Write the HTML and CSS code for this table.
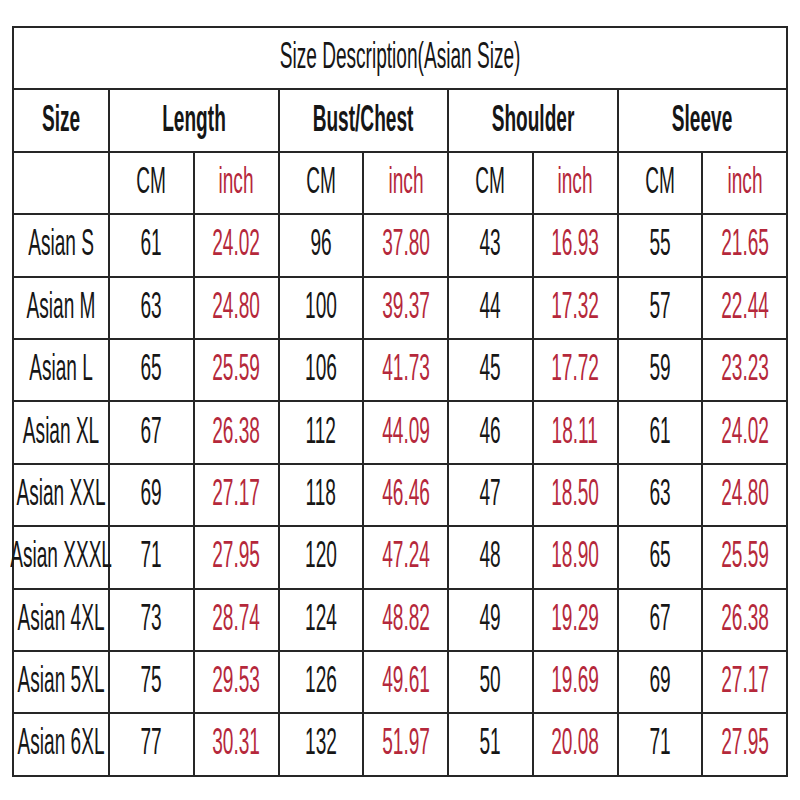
FILE: index.html
```html
<!DOCTYPE html>
<html>
<head>
<meta charset="utf-8">
<link rel="stylesheet" href="styles.css">
</head>
<body>
<table class="sizes">
  <colgroup>
    <col class="c-size">
    <col class="c-val"><col class="c-val"><col class="c-val"><col class="c-val">
    <col class="c-val"><col class="c-val"><col class="c-val"><col class="c-val">
  </colgroup>
  <tr><td colspan="9"><div class="cell"><span class="t">Size Description(Asian Size)</span></div></td></tr>
  <tr class="head">
    <td><div class="cell"><span class="t">Size</span></div></td>
    <td colspan="2"><div class="cell"><span class="t">Length</span></div></td>
    <td colspan="2"><div class="cell"><span class="t">Bust/Chest</span></div></td>
    <td colspan="2"><div class="cell"><span class="t">Shoulder</span></div></td>
    <td colspan="2"><div class="cell"><span class="t">Sleeve</span></div></td>
  </tr>
  <tr>
    <td></td>
    <td><div class="cell"><span class="t">CM</span></div></td><td class="red"><div class="cell"><span class="t">inch</span></div></td>
    <td><div class="cell"><span class="t">CM</span></div></td><td class="red"><div class="cell"><span class="t">inch</span></div></td>
    <td><div class="cell"><span class="t">CM</span></div></td><td class="red"><div class="cell"><span class="t">inch</span></div></td>
    <td><div class="cell"><span class="t">CM</span></div></td><td class="red"><div class="cell"><span class="t">inch</span></div></td>
  </tr>
  <tr>
    <td><div class="cell"><span class="t">Asian S</span></div></td>
    <td><div class="cell"><span class="t">61</span></div></td><td class="red"><div class="cell"><span class="t">24.02</span></div></td>
    <td><div class="cell"><span class="t">96</span></div></td><td class="red"><div class="cell"><span class="t">37.80</span></div></td>
    <td><div class="cell"><span class="t">43</span></div></td><td class="red"><div class="cell"><span class="t">16.93</span></div></td>
    <td><div class="cell"><span class="t">55</span></div></td><td class="red"><div class="cell"><span class="t">21.65</span></div></td>
  </tr>
  <tr>
    <td><div class="cell"><span class="t">Asian M</span></div></td>
    <td><div class="cell"><span class="t">63</span></div></td><td class="red"><div class="cell"><span class="t">24.80</span></div></td>
    <td><div class="cell"><span class="t">100</span></div></td><td class="red"><div class="cell"><span class="t">39.37</span></div></td>
    <td><div class="cell"><span class="t">44</span></div></td><td class="red"><div class="cell"><span class="t">17.32</span></div></td>
    <td><div class="cell"><span class="t">57</span></div></td><td class="red"><div class="cell"><span class="t">22.44</span></div></td>
  </tr>
  <tr>
    <td><div class="cell"><span class="t">Asian L</span></div></td>
    <td><div class="cell"><span class="t">65</span></div></td><td class="red"><div class="cell"><span class="t">25.59</span></div></td>
    <td><div class="cell"><span class="t">106</span></div></td><td class="red"><div class="cell"><span class="t">41.73</span></div></td>
    <td><div class="cell"><span class="t">45</span></div></td><td class="red"><div class="cell"><span class="t">17.72</span></div></td>
    <td><div class="cell"><span class="t">59</span></div></td><td class="red"><div class="cell"><span class="t">23.23</span></div></td>
  </tr>
  <tr>
    <td><div class="cell"><span class="t">Asian XL</span></div></td>
    <td><div class="cell"><span class="t">67</span></div></td><td class="red"><div class="cell"><span class="t">26.38</span></div></td>
    <td><div class="cell"><span class="t">112</span></div></td><td class="red"><div class="cell"><span class="t">44.09</span></div></td>
    <td><div class="cell"><span class="t">46</span></div></td><td class="red"><div class="cell"><span class="t">18.11</span></div></td>
    <td><div class="cell"><span class="t">61</span></div></td><td class="red"><div class="cell"><span class="t">24.02</span></div></td>
  </tr>
  <tr>
    <td><div class="cell"><span class="t">Asian XXL</span></div></td>
    <td><div class="cell"><span class="t">69</span></div></td><td class="red"><div class="cell"><span class="t">27.17</span></div></td>
    <td><div class="cell"><span class="t">118</span></div></td><td class="red"><div class="cell"><span class="t">46.46</span></div></td>
    <td><div class="cell"><span class="t">47</span></div></td><td class="red"><div class="cell"><span class="t">18.50</span></div></td>
    <td><div class="cell"><span class="t">63</span></div></td><td class="red"><div class="cell"><span class="t">24.80</span></div></td>
  </tr>
  <tr>
    <td><div class="cell"><span class="t">Asian XXXL</span></div></td>
    <td><div class="cell"><span class="t">71</span></div></td><td class="red"><div class="cell"><span class="t">27.95</span></div></td>
    <td><div class="cell"><span class="t">120</span></div></td><td class="red"><div class="cell"><span class="t">47.24</span></div></td>
    <td><div class="cell"><span class="t">48</span></div></td><td class="red"><div class="cell"><span class="t">18.90</span></div></td>
    <td><div class="cell"><span class="t">65</span></div></td><td class="red"><div class="cell"><span class="t">25.59</span></div></td>
  </tr>
  <tr>
    <td><div class="cell"><span class="t">Asian 4XL</span></div></td>
    <td><div class="cell"><span class="t">73</span></div></td><td class="red"><div class="cell"><span class="t">28.74</span></div></td>
    <td><div class="cell"><span class="t">124</span></div></td><td class="red"><div class="cell"><span class="t">48.82</span></div></td>
    <td><div class="cell"><span class="t">49</span></div></td><td class="red"><div class="cell"><span class="t">19.29</span></div></td>
    <td><div class="cell"><span class="t">67</span></div></td><td class="red"><div class="cell"><span class="t">26.38</span></div></td>
  </tr>
  <tr>
    <td><div class="cell"><span class="t">Asian 5XL</span></div></td>
    <td><div class="cell"><span class="t">75</span></div></td><td class="red"><div class="cell"><span class="t">29.53</span></div></td>
    <td><div class="cell"><span class="t">126</span></div></td><td class="red"><div class="cell"><span class="t">49.61</span></div></td>
    <td><div class="cell"><span class="t">50</span></div></td><td class="red"><div class="cell"><span class="t">19.69</span></div></td>
    <td><div class="cell"><span class="t">69</span></div></td><td class="red"><div class="cell"><span class="t">27.17</span></div></td>
  </tr>
  <tr>
    <td><div class="cell"><span class="t">Asian 6XL</span></div></td>
    <td><div class="cell"><span class="t">77</span></div></td><td class="red"><div class="cell"><span class="t">30.31</span></div></td>
    <td><div class="cell"><span class="t">132</span></div></td><td class="red"><div class="cell"><span class="t">51.97</span></div></td>
    <td><div class="cell"><span class="t">51</span></div></td><td class="red"><div class="cell"><span class="t">20.08</span></div></td>
    <td><div class="cell"><span class="t">71</span></div></td><td class="red"><div class="cell"><span class="t">27.95</span></div></td>
  </tr>
</table>
</body>
</html>
```
FILE: styles.css
```css
html, body {
  margin: 0;
  padding: 0;
  background: #ffffff;
}
body {
  padding: 26px 0 0 12px;
  font-family: "Liberation Sans", Arial, sans-serif;
  color: #161616;
}
.sizes {
  border-collapse: collapse;
  table-layout: fixed;
  width: 774px;
  border: 2px solid #262626;
}
.c-size { width: 96px; }
.c-val { width: 84.75px; }
.sizes td {
  border: 2px solid #262626;
  height: 60.4px;
  padding: 0;
  overflow: visible;
}
.cell {
  display: flex;
  justify-content: center;
  align-items: center;
  height: 60.4px;
  padding-bottom: 4px;
  box-sizing: border-box;
}
.t {
  flex-shrink: 0;
  display: inline-block;
  font-size: 36px;
  line-height: 1;
  white-space: nowrap;
  transform: scaleX(0.53);
}
.head .t {
  font-weight: bold;
}
.red {
  color: #b5283b;
}
```
